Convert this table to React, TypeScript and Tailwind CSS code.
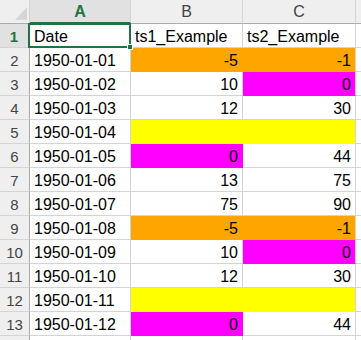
import React from "react";

type Fill = "orange" | "magenta" | "yellow" | null;
type Cell = { v: string; fill: Fill };

const rows: { date: string; b: Cell; c: Cell }[] = [
  { date: "1950-01-01", b: { v: "-5", fill: "orange" }, c: { v: "-1", fill: "orange" } },
  { date: "1950-01-02", b: { v: "10", fill: null }, c: { v: "0", fill: "magenta" } },
  { date: "1950-01-03", b: { v: "12", fill: null }, c: { v: "30", fill: null } },
  { date: "1950-01-04", b: { v: "", fill: "yellow" }, c: { v: "", fill: "yellow" } },
  { date: "1950-01-05", b: { v: "0", fill: "magenta" }, c: { v: "44", fill: null } },
  { date: "1950-01-06", b: { v: "13", fill: null }, c: { v: "75", fill: null } },
  { date: "1950-01-07", b: { v: "75", fill: null }, c: { v: "90", fill: null } },
  { date: "1950-01-08", b: { v: "-5", fill: "orange" }, c: { v: "-1", fill: "orange" } },
  { date: "1950-01-09", b: { v: "10", fill: null }, c: { v: "0", fill: "magenta" } },
  { date: "1950-01-10", b: { v: "12", fill: null }, c: { v: "30", fill: null } },
  { date: "1950-01-11", b: { v: "", fill: "yellow" }, c: { v: "", fill: "yellow" } },
  { date: "1950-01-12", b: { v: "0", fill: "magenta" }, c: { v: "44", fill: null } },
];

// B cells hide their right gridline when filled, C keeps it
const fillB: Record<string, string> = {
  orange: "bg-[#ffa500] border-r-[#ffa500] border-b-[#ffa500]",
  magenta: "bg-[#ff00ff] border-r-[#ff00ff] border-b-[#ff00ff]",
  yellow: "bg-[#ffff00] border-r-[#ffff00] border-b-[#ffff00]",
};
const fillC: Record<string, string> = {
  orange: "bg-[#ffa500] border-b-[#ffa500]",
  magenta: "bg-[#ff00ff] border-b-[#ff00ff]",
  yellow: "bg-[#ffff00] border-b-[#ffff00]",
};

const cell = "h-6 border-r border-b border-[#d4d4d4] pt-px leading-[24px] text-[16px] text-black overflow-visible whitespace-nowrap";
const rowHead = "h-6 border-r border-b border-r-[#ababab] border-b-[#d4d4d4] bg-[#efefef] pt-px text-center leading-[24px] text-[15px] text-[#444444]";

export default function App() {
  return (
    <div
      className="w-[361px] h-[340px] overflow-hidden bg-white"
      style={{ fontFamily: '"Liberation Sans", Arial, sans-serif' }}
    >
      <div className="grid grid-cols-[30px_101px_112px_113px_1fr]">
        {/* column headers */}
        <div className="relative h-6 border-r border-b border-r-[#d4d4d4] border-b-[#ababab] bg-[#efefef]">
          <svg className="absolute left-[15px] top-[7px]" width="12" height="13" viewBox="0 0 12 13">
            <polygon points="12,0 12,13 0,13" fill="#d6d6d6" />
          </svg>
        </div>
        <div className="h-6 border-r border-b-2 border-r-[#d4d4d4] border-b-[#217346] bg-[#e1e1e1] text-center leading-[23px] text-[16px] font-bold text-[#217346]">
          A
        </div>
        <div className="h-6 border-r border-b border-r-[#d4d4d4] border-b-[#ababab] bg-[#efefef] text-center leading-[24px] text-[16px] text-[#444444]">
          B
        </div>
        <div className="h-6 border-r border-b border-r-[#d4d4d4] border-b-[#ababab] bg-[#efefef] text-center leading-[24px] text-[16px] text-[#444444]">
          C
        </div>
        <div className="h-6 border-b border-b-[#ababab] bg-[#efefef]" />

        {/* row 1 */}
        <div className="h-6 border-r-2 border-b border-r-[#217346] border-b-[#d4d4d4] bg-[#e1e1e1] pt-px text-center leading-[24px] text-[15px] font-bold text-[#217346]">
          1
        </div>
        <div className={`${cell} relative pl-1`}>
          Date
          <div className="pointer-events-none absolute -left-[2px] -top-[1px] -right-[1px] -bottom-[1px] border-2 border-[#217346]" />
          <div className="absolute -right-[3px] -bottom-[3px] h-[6px] w-[6px] border border-white bg-[#217346]" />
        </div>
        <div className={`${cell} pl-1`}>ts1_Example</div>
        <div className={`${cell} pl-1`}>ts2_Example</div>
        <div className="h-6 border-b border-[#d4d4d4]" />

        {rows.map((r, i) => (
          <React.Fragment key={r.date}>
            <div className={rowHead}>{i + 2}</div>
            <div className={`${cell} pl-1`}>{r.date}</div>
            <div className={`${cell} pr-1 text-right ${r.b.fill ? fillB[r.b.fill] : ""}`}>{r.b.v}</div>
            <div className={`${cell} pr-1 text-right ${r.c.fill ? fillC[r.c.fill] : ""}`}>{r.c.v}</div>
            <div className="h-6 border-b border-[#d4d4d4]" />
          </React.Fragment>
        ))}

        {/* row 14, cut off at the bottom edge */}
        <div className="h-6 border-r border-r-[#ababab] bg-[#efefef]" />
        <div className="h-6 border-r border-[#d4d4d4]" />
        <div className="h-6 border-r border-[#d4d4d4]" />
        <div className="h-6 border-r border-[#d4d4d4]" />
        <div className="h-6" />
      </div>
    </div>
  );
}
